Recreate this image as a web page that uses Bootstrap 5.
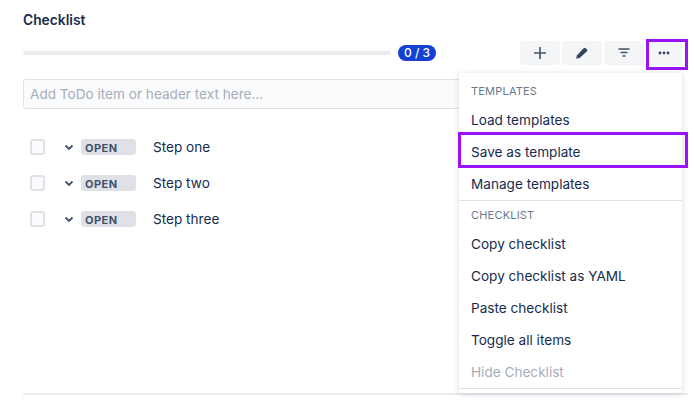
<!DOCTYPE html>
<html lang="en"><head><meta charset="utf-8"><title>Checklist</title>
<link href="https://cdn.jsdelivr.net/npm/bootstrap@5.3.0/dist/css/bootstrap.min.css" rel="stylesheet">
<style>
html,body{height:403px;overflow:hidden}
body{font-family:Inter,"Liberation Sans",sans-serif;color:#172b4d;background:#fff;font-size:13.6px}
.cl-wrap{position:relative;height:403px;padding:12px 6px 0 23px}
.cl-title{font-size:13.8px;font-weight:600;line-height:16px;margin:0 0 13px}
.cl-toolbar{height:24px;margin-bottom:14px;padding-right:6px}
.cl-track{width:368px;height:4px;border-radius:2px;background:#ebecf0}
.cl-count{width:38px;height:16px;margin-left:7px;border-radius:8px;background:#1440d4;color:#fff;font-size:12px;font-weight:500;line-height:16px;text-align:center}
.cl-tools{gap:2px;margin-left:auto}
.cl-tool{width:40px;height:24px;padding:0;border:0;border-radius:3px;background:#f4f5f7;color:#42526e}
.cl-tool:last-child{width:36px}
.cl-input{width:640px;height:30px;padding:0 6px;border:1px solid #dfe1e6;border-radius:3px;background:#fafbfc;font-size:13.6px;color:#172b4d;margin-bottom:20px}
.cl-input::placeholder{color:#a5adba;opacity:1}
.cl-row{height:36px;padding-left:7px}
.cl-box{width:15px;height:16px;border:2px solid #dfe1e6;border-radius:3px;background:#fafbfc;margin-right:18px}
.cl-chev{margin-right:6px;color:#42526e}
.cl-status{width:55px;height:16px;border-radius:3px;background:#dfe1e6;color:#42526e;font-size:11px;font-weight:700;line-height:16px;padding:1px 0 0 4px;letter-spacing:.5px;margin-right:17px}
.cl-foot{position:absolute;left:23px;right:6px;top:393px;height:2px;background:#ebecf0}
.cl-menu{position:absolute;left:459px;top:73px;width:223px;height:320px;background:#fff;box-shadow:0 1px 6px rgba(9,30,66,.16);border-radius:3px;z-index:2}
.cl-head{font-size:11px;line-height:14px;color:#6b778c;text-transform:uppercase;letter-spacing:.2px;padding:11px 12px 6px}
.cl-sec+.cl-sec{border-top:1px solid #dfe1e6}
.cl-sec+.cl-sec .cl-head{padding-top:7px}
.cl-item{height:32px;padding:0 12px;line-height:32px;font-size:13.6px;color:#172b4d}
.cl-off{color:#a5adba}
.cl-mark{position:absolute;border:3px solid #9a12f5;z-index:3}
.cl-mark-a{left:646px;top:39px;width:42px;height:31px}
.cl-mark-b{left:458px;top:132px;width:230px;height:36px}
</style></head>
<body>
<div class="cl-wrap">
  <h1 class="cl-title">Checklist</h1>
  <div class="cl-toolbar d-flex align-items-center">
    <div class="cl-track"></div>
    <div class="cl-count">0 / 3</div>
    <div class="cl-tools d-flex">
      <button class="cl-tool d-flex align-items-center justify-content-center" aria-label="Add"><svg width="14" height="14" viewBox="0 0 14 14"><path d="M7 1v12M1 7h12" stroke="currentColor" stroke-width="1.6"/></svg></button>
      <button class="cl-tool d-flex align-items-center justify-content-center" aria-label="Edit"><svg width="14" height="14" viewBox="0 0 14 14"><path d="M1.2 12.8l.7-3.4L8.6 2.2a1.5 1.5 0 0 1 2.1 0l1.1 1.1a1.5 1.5 0 0 1 0 2.1L4.6 12.1z" fill="#344563"/></svg></button>
      <button class="cl-tool d-flex align-items-center justify-content-center" aria-label="Filter"><svg width="14" height="14" viewBox="0 0 14 14"><path d="M1.5 3h11M3.5 6.5h7M5.5 10h3" stroke="currentColor" stroke-width="1.4"/></svg></button>
      <button class="cl-tool d-flex align-items-center justify-content-center" aria-label="More"><svg width="12" height="4" viewBox="0 0 12 4"><g fill="#344563"><circle cx="2" cy="2" r="1.4"/><circle cx="6" cy="2" r="1.4"/><circle cx="10" cy="2" r="1.4"/></g></svg></button>
    </div>
  </div>
  <input class="cl-input d-block" placeholder="Add ToDo item or header text here...">
  <div class="cl-row d-flex align-items-center"><span class="cl-box"></span><svg class="cl-chev" width="12" height="12" viewBox="0 0 12 12"><path d="M2.5 4.5L6 8l3.5-3.5" fill="none" stroke="currentColor" stroke-width="1.8"/></svg><span class="cl-status">OPEN</span><span>Step one</span></div>
  <div class="cl-row d-flex align-items-center"><span class="cl-box"></span><svg class="cl-chev" width="12" height="12" viewBox="0 0 12 12"><path d="M2.5 4.5L6 8l3.5-3.5" fill="none" stroke="currentColor" stroke-width="1.8"/></svg><span class="cl-status">OPEN</span><span>Step two</span></div>
  <div class="cl-row d-flex align-items-center"><span class="cl-box"></span><svg class="cl-chev" width="12" height="12" viewBox="0 0 12 12"><path d="M2.5 4.5L6 8l3.5-3.5" fill="none" stroke="currentColor" stroke-width="1.8"/></svg><span class="cl-status">OPEN</span><span>Step three</span></div>
  <div class="cl-foot"></div>
  <div class="cl-menu">
    <div class="cl-sec">
      <div class="cl-head">Templates</div>
      <div class="cl-item">Load templates</div>
      <div class="cl-item">Save as template</div>
      <div class="cl-item">Manage templates</div>
    </div>
    <div class="cl-sec">
      <div class="cl-head">Checklist</div>
      <div class="cl-item">Copy checklist</div>
      <div class="cl-item">Copy checklist as YAML</div>
      <div class="cl-item">Paste checklist</div>
      <div class="cl-item">Toggle all items</div>
      <div class="cl-item cl-off">Hide Checklist</div>
    </div>
    <div class="cl-sec"></div>
  </div>
  <div class="cl-mark cl-mark-a"></div>
  <div class="cl-mark cl-mark-b"></div>
</div>
<script src="https://cdn.jsdelivr.net/npm/bootstrap@5.3.0/dist/js/bootstrap.bundle.min.js"></script>
</body></html>
